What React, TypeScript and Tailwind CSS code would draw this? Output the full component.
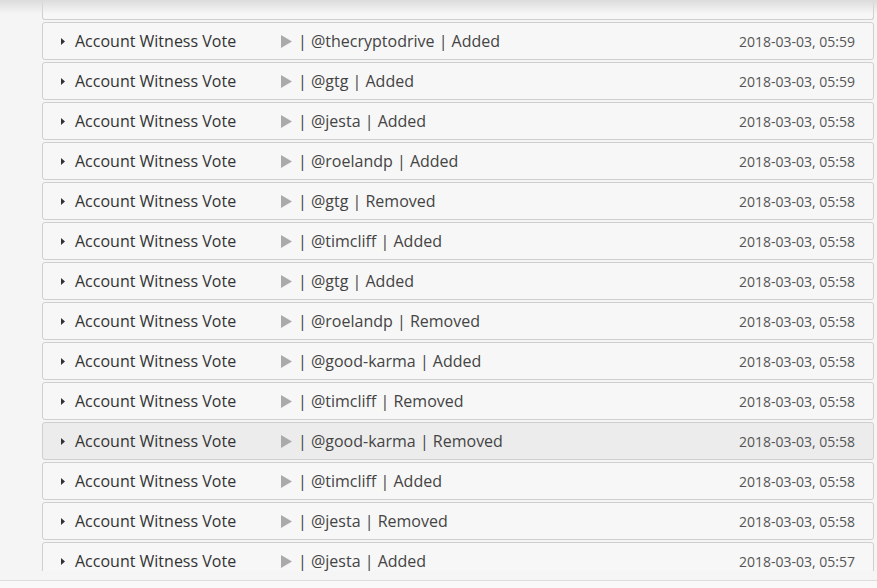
import React from "react";

const rows = [
  { who: "thecryptodrive", action: "Added", time: "05:59" },
  { who: "gtg", action: "Added", time: "05:59" },
  { who: "jesta", action: "Added", time: "05:58" },
  { who: "roelandp", action: "Added", time: "05:58" },
  { who: "gtg", action: "Removed", time: "05:58" },
  { who: "timcliff", action: "Added", time: "05:58" },
  { who: "gtg", action: "Added", time: "05:58" },
  { who: "roelandp", action: "Removed", time: "05:58" },
  { who: "good-karma", action: "Added", time: "05:58" },
  { who: "timcliff", action: "Removed", time: "05:58" },
  { who: "good-karma", action: "Removed", time: "05:58", hover: true },
  { who: "timcliff", action: "Added", time: "05:58" },
  { who: "jesta", action: "Removed", time: "05:58" },
  { who: "jesta", action: "Added", time: "05:57" },
];

function Row({ who, action, time, hover }: { who: string; action: string; time: string; hover?: boolean }) {
  return (
    <div
      className={`flex items-center h-[38px] border border-[#cfcfcf] rounded-[3px] pl-[18px] pr-[18px] ${
        hover ? "bg-[#ececec]" : "bg-[#f7f7f7]"
      }`}
    >
      <svg width="4" height="7" viewBox="0 0 4 7" className="shrink-0">
        <path d="M0 0 L4 3.5 L0 7 Z" fill="#333" />
      </svg>
      <span className="ml-[10px] w-[206px] text-[16px] text-[#333]">Account Witness Vote</span>
      <svg width="11" height="13" viewBox="0 0 11 13" className="shrink-0">
        <path d="M0 0 L11 6.5 L0 13 Z" fill="#aaaaaa" />
      </svg>
      <span className="ml-[6px] text-[16px] text-[#444]">
        | @{who} | {action}
      </span>
      <span className="ml-auto text-[14px] text-[#555]">2018-03-03, {time}</span>
    </div>
  );
}

export default function App() {
  return (
    <div
      className="w-[877px] h-[588px] bg-[#f5f5f5] flex flex-col overflow-hidden"
      style={{ fontFamily: '"Open Sans", "Noto Sans", sans-serif' }}
    >
      <div className="relative h-[571px] overflow-hidden pl-[42px] pr-[3px]">
        <div className="absolute top-0 left-0 right-0 h-[14px] bg-gradient-to-b from-[#dcdcdc] to-transparent z-10" />
        <div className="flex flex-col gap-[2px]">
          <div className="h-[20px] border border-t-0 border-[#cfcfcf] rounded-b-[3px] bg-[#f7f7f7]" />
          {rows.map((r, i) => (
            <Row key={i} {...r} />
          ))}
        </div>
      </div>
      <div className="h-[9px]" />
      <div className="border-t border-[#dcdcdc] bg-[#f9f9f9] flex-1" />
    </div>
  );
}
